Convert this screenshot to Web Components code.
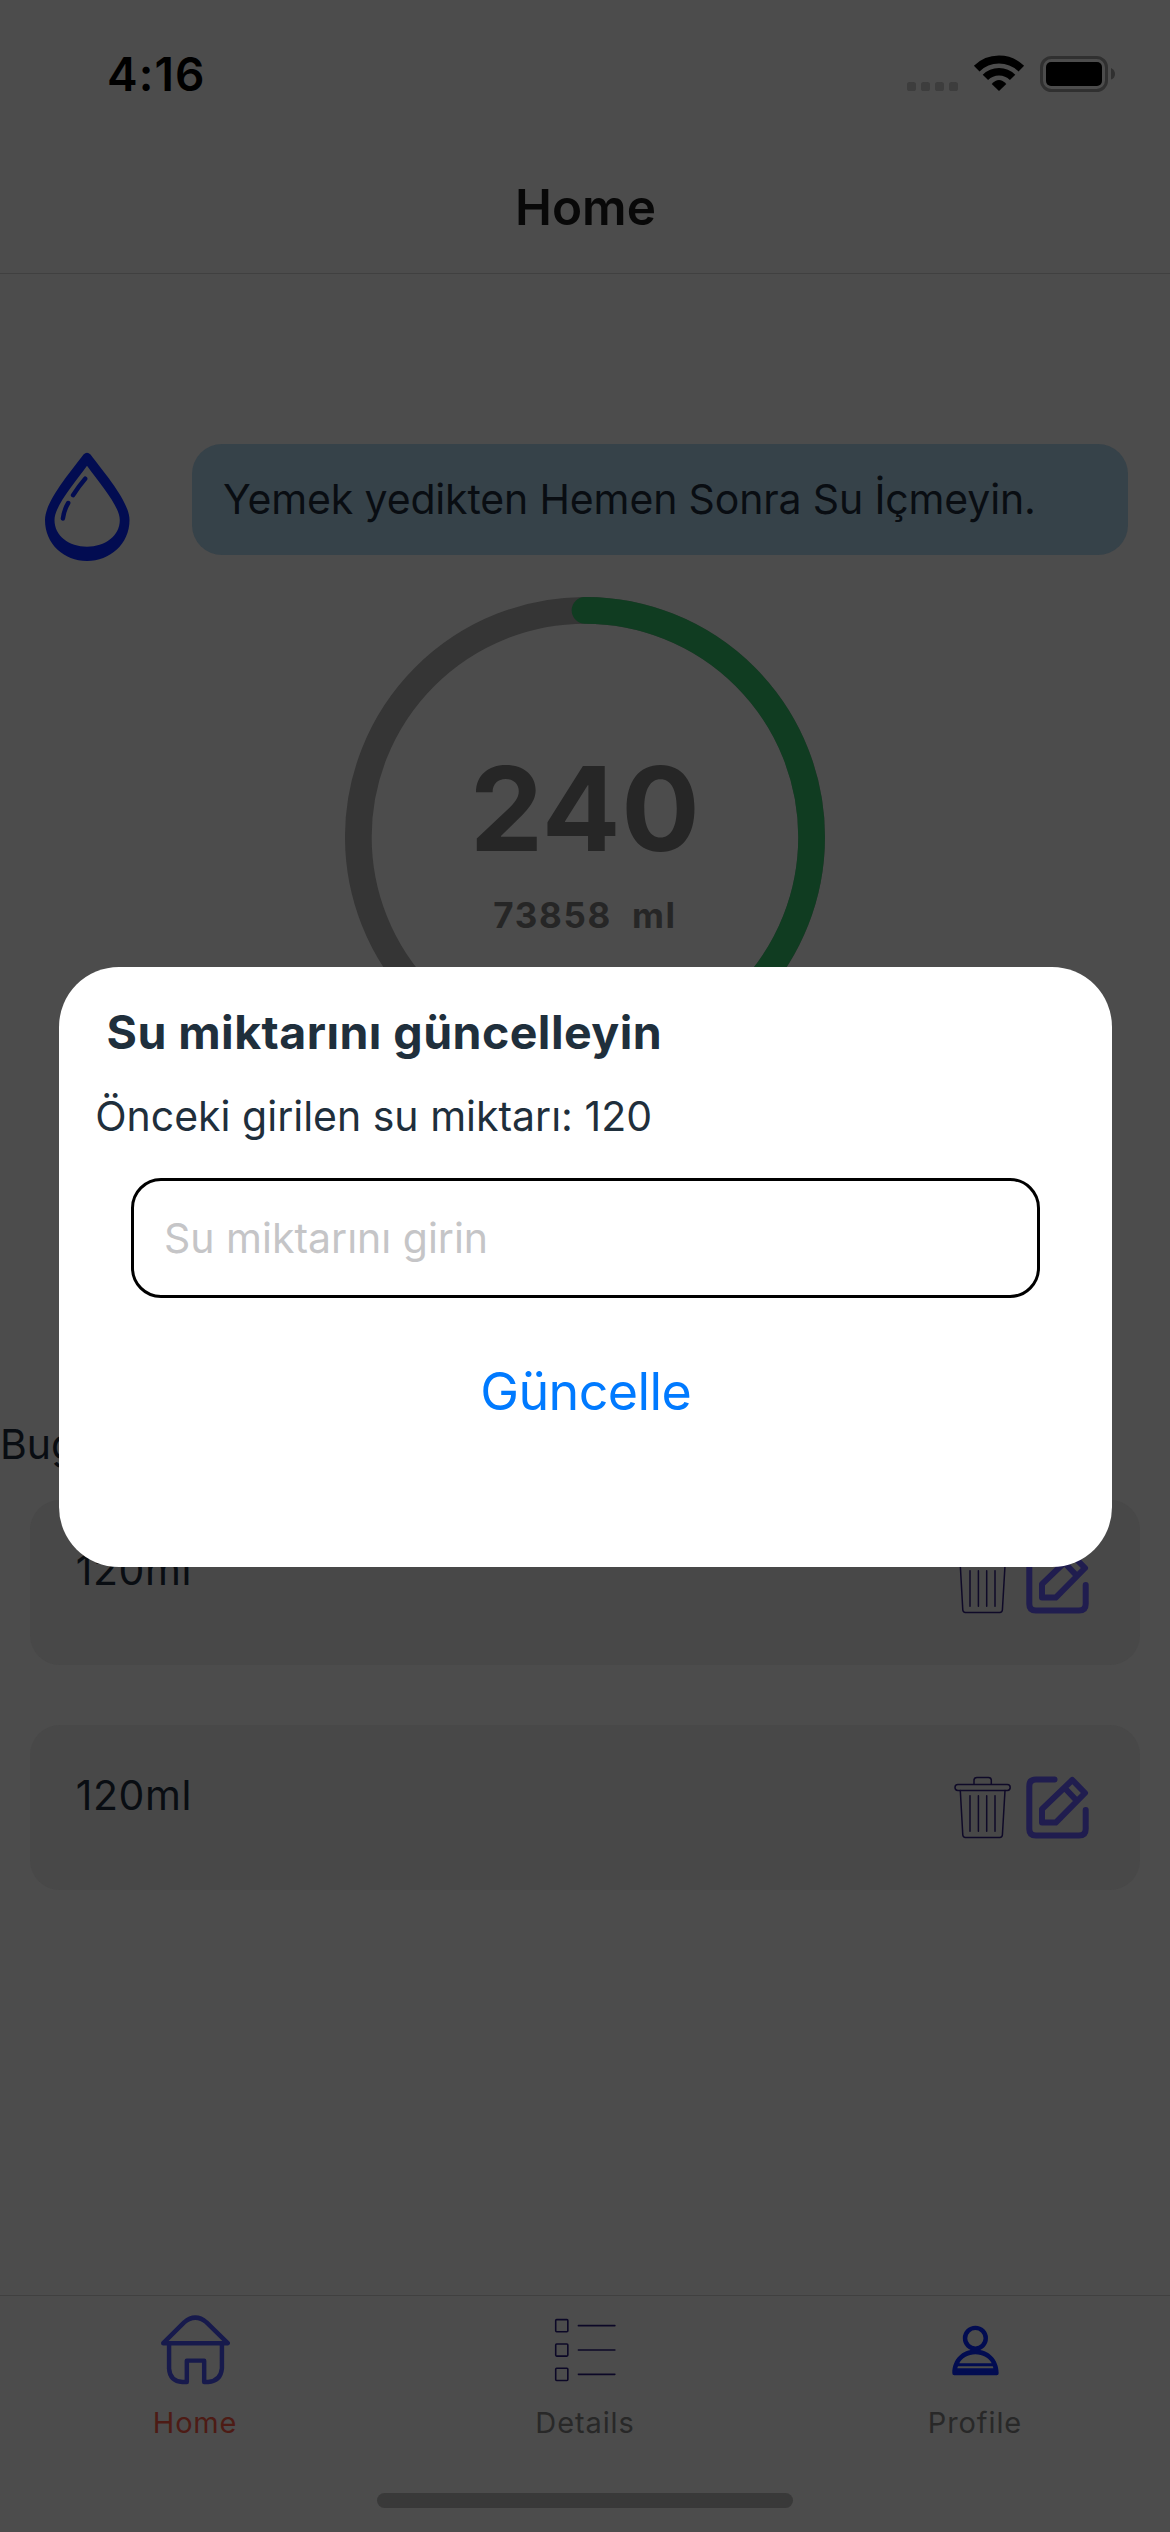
<!DOCTYPE html>
<html lang="tr">
<head>
<meta charset="utf-8">
<title>Home</title>
<style>
html, body { margin: 0; padding: 0; background: #4c4c4c; }
body { width: 1170px; height: 2532px; overflow: hidden; font-family: Inter, "Liberation Sans", sans-serif; }
</style>
</head>
<body>
<water-app></water-app>
<script>
const define = (name, html) => {
  const template = document.createElement('template');
  template.innerHTML = html;
  customElements.define(name, class extends HTMLElement {
    constructor() {
      super();
      this.attachShadow({ mode: 'open' }).append(template.content.cloneNode(true));
    }
  });
};

define('status-bar', `
<style>
:host { display: flex; justify-content: space-between; align-items: flex-start; box-sizing: border-box; height: 141px; padding: 44px 55px 0 107px; color: #000; }
.time { font-size: 46px; line-height: 60px; font-weight: 600; letter-spacing: 1.1px; }
svg { display: block; margin-top: 6px; }
</style>
<span class="time"><slot></slot></span>
<svg width="208" height="46" viewBox="0 0 208 46" fill="none">
  <g fill="#3d3d3d"><rect y="32" width="9" height="9" rx="2.6"/><rect x="14" y="32" width="9" height="9" rx="2.6"/><rect x="28" y="32" width="9" height="9" rx="2.6"/><rect x="42" y="32" width="9" height="9" rx="2.6"/></g>
  <path d="M69.7 18.7A31.8 31.8 0 0 1 114.3 18.7" stroke="#000" stroke-width="8"/>
  <path d="M78.4 27.4A19.2 19.2 0 0 1 105.6 27.4" stroke="#000" stroke-width="7.6"/>
  <path d="M92 41L84.7 33.9Q92 26.3 99.3 33.9Z" fill="#000"/>
  <rect x="134.5" y="7.5" width="65" height="33" rx="10" stroke="#303030" stroke-width="3"/>
  <rect x="139" y="12" width="56" height="24" rx="5" fill="#000"/>
  <path d="M204 18Q208 20 208 24T204 29.6Z" fill="#303030"/>
</svg>`);

define('nav-header', `
<style>
:host { display: flex; align-items: center; justify-content: center; box-sizing: border-box; height: 133px; padding-left: 1px; border-bottom: 1px solid #404040; color: #080808; font-size: 49.5px; line-height: 60px; font-weight: 600; }
</style><slot></slot>`);

define('drinking-tip', `
<style>
:host { display: flex; height: 111px; padding-left: 44px; }
svg { display: block; flex: none; margin: 6px 60px 0 0; }
.bubble { display: flex; align-items: center; box-sizing: border-box; width: 936px; height: 111px; padding: 0 0 2px 31px; border-radius: 30px; background: #364249; color: #090d12; font-size: 41px; line-height: 50px; letter-spacing: -0.15px; white-space: nowrap; }
</style>
<svg width="88" height="114" viewBox="0 0 88 114">
  <path fill="#020c51" fill-rule="evenodd" d="M39.5 4.5Q43 1 46.5 4.5C62 25 85.5 52 85.5 70C85.5 94 66 111 43 111S1 94 1 70C1 52 24 25 39.5 4.5ZM43 15.7C56 34 75.8 56 75.8 70C75.8 86 61 96.7 43 96.7S10.5 86 10.5 70C10.5 56 30 34 43 15.7Z"/>
  <path fill="none" stroke="#020c51" stroke-width="4.4" stroke-linecap="round" d="M41.2 28.7Q34.5 36.5 29 45.2M24.2 53Q20 60 18.9 68.5"/>
</svg>
<div class="bubble"><slot></slot></div>`);

define('progress-ring', `
<style>
:host { display: grid; justify-content: center; margin-top: 42px; font-weight: 700; color: #262626; }
svg, .label { grid-area: 1 / 1; display: block; }
.label { display: flex; flex-direction: column; align-items: center; padding-top: 142px; }
.value { font-size: 116.5px; line-height: 140px; letter-spacing: 0.5px; }
.goal { font-size: 35px; line-height: 44px; margin-top: 14px; letter-spacing: 1.7px; white-space: pre; }
</style>
<svg width="480" height="480" viewBox="0 0 480 480" fill="none" stroke-width="26.67">
  <circle cx="240" cy="240" r="226.67" stroke="#353535"/>
  <path d="M240 13.33A226.67 226.67 0 0 1 240 466.67" stroke="#103c21" stroke-linecap="round"/>
</svg>
<div class="label"><span class="value"><slot name="value"></slot></span><span class="goal"><slot name="goal"></slot></span></div>`);

define('trash-icon', `
<style>:host { display: block; }svg { display: block; }</style>
<svg width="60" height="66" viewBox="0 0 60 66" fill="none" stroke="#0f0a28" stroke-width="1.5" stroke-linecap="round" stroke-linejoin="round">
  <rect x="3" y="9.5" width="55.2" height="5.9" rx="2.9"/>
  <path d="M22 9.3V5.3Q22 2.4 25 2.4H36.4Q39.3 2.4 39.3 5.3V9.3M8.3 15.5L10.8 60Q11 62.4 13.4 62.4H47.8Q50.2 62.4 50.4 60L53 15.5M18 20.8V56.2M26.4 20.8V56.2M34.7 20.8V56.2M43 20.8V56.2"/>
</svg>`);

define('edit-icon', `
<style>:host { display: block; }svg { display: block; }</style>
<svg width="68" height="66" viewBox="0 0 68 66" fill="none" stroke="#201d4f" stroke-width="6" stroke-linecap="round" stroke-linejoin="round">
  <path d="M30.5 4.4H12Q5.3 4.4 5.3 11V54Q5.3 60.6 12 60.6H55Q61.7 60.6 61.7 54V35M48.3 5L61 18L31.7 47.6H18V34.2ZM40.7 13L53 26"/>
</svg>`);

define('intake-card', `
<style>
:host { display: flex; align-items: flex-start; box-sizing: border-box; height: 165px; padding: 45px 48px 0 45.7px; border-radius: 30px; background: #484848; color: #090d12; }
.amount { flex: 1; font-size: 41px; line-height: 50px; letter-spacing: 0.6px; }
.actions { display: flex; gap: 12px; padding-top: 5px; }
</style>
<span class="amount"><slot></slot></span>
<div class="actions"><trash-icon></trash-icon><edit-icon></edit-icon></div>`);

define('intake-list', `
<style>
:host { display: block; margin-top: 342px; }
.heading { display: block; font-size: 41px; line-height: 50px; color: #090d12; }
.cards { display: flex; flex-direction: column; gap: 60px; margin: 31px 30px 0; }
</style>
<span class="heading"><slot name="heading"></slot></span>
<div class="cards"><slot></slot></div>`);

define('tab-item', `
<style>
:host { display: flex; flex: 1; flex-direction: column; align-items: center; gap: 20px; color: #282828; font-size: 29px; line-height: 36px; letter-spacing: 0.9px; }
:host([active]) { color: #4d1b15; letter-spacing: 0.75px; }
</style>
<slot name="icon"></slot><span><slot></slot></span>`);

define('tab-bar', `
<style>
:host { display: flex; flex-direction: column; align-items: center; box-sizing: border-box; height: 237px; margin-top: auto; padding-top: 18px; border-top: 1px solid #404040; }
.tabs { display: flex; width: 100%; height: 127px; }
.indicator { width: 416px; height: 15px; margin-top: 52px; border-radius: 8px; background: #393939; }
</style>
<div class="tabs"><slot></slot></div><div class="indicator"></div>`);

define('update-dialog', `
<style>
:host { position: absolute; inset: 0; display: flex; align-items: center; justify-content: center; color: #1f2f3c; }
.sheet { display: flex; flex-direction: column; box-sizing: border-box; width: 1053px; height: 600px; margin-top: 2px; padding-top: 34.5px; border-radius: 60px; background: #fff; }
.title { margin-left: 48px; font-size: 46.5px; line-height: 60px; font-weight: 700; letter-spacing: 0.44px; }
.previous { margin: 29.5px 0 0 36.7px; font-size: 41px; line-height: 50px; }
.field { display: flex; align-items: center; box-sizing: border-box; width: 909px; height: 120px; margin: 37px 0 0 72.5px; padding-left: 30px; border: 3px solid #000; border-radius: 30px; color: #c5c5c7; font-size: 41px; line-height: 50px; }
.submit { align-self: center; margin-top: 62px; padding-left: 1.5px; font-size: 52px; line-height: 64px; letter-spacing: -0.6px; color: #007aff; }
</style>
<section class="sheet" role="dialog">
  <span class="title"><slot name="title"></slot></span>
  <span class="previous"><slot name="previous"></slot></span>
  <div class="field"><slot name="placeholder"></slot></div>
  <span class="submit" role="button"><slot name="submit"></slot></span>
</section>`);

define('water-app', `
<style>
:host { position: relative; display: flex; flex-direction: column; width: 1170px; height: 2532px; overflow: hidden; background: #4c4c4c; }
main { padding-top: 170px; }
svg { display: block; }
</style>
<status-bar>4:16</status-bar>
<nav-header>Home</nav-header>
<main>
  <drinking-tip>Yemek yedikten Hemen Sonra Su İçmeyin.</drinking-tip>
  <progress-ring><span slot="value">240</span><span slot="goal">73858&nbsp;&nbsp;ml</span></progress-ring>
  <intake-list>
    <span slot="heading">Bug</span>
    <intake-card>120ml</intake-card>
    <intake-card>120ml</intake-card>
  </intake-list>
</main>
<tab-bar>
  <tab-item active>
    <svg slot="icon" width="72" height="72" viewBox="0 0 72 72" fill="none" stroke="#171a4c" stroke-width="4.5" stroke-linejoin="round" stroke-linecap="round"><path d="M3.8 29.6L25 8.5Q36.3 -1.1 47.7 8.5L69.2 29.6ZM9.7 29.7V55.3Q10.5 68 23.3 69H27.7V47.3H45.3V69H49.3Q62 68 63.3 55.3V29.7"/></svg>
    Home
  </tab-item>
  <tab-item>
    <svg slot="icon" width="72" height="72" viewBox="0 0 72 72" fill="none" stroke="#0c0827" stroke-width="1.6" stroke-linecap="round"><rect x="6.3" y="5.7" width="12.3" height="12.3" rx="1"/><rect x="6.3" y="30.4" width="12.3" height="12.3" rx="1"/><rect x="6.3" y="55.1" width="12.3" height="12.3" rx="1"/><path d="M29.3 11.8H66.3M29.3 36.5H66.3M29.3 61.2H66.3"/></svg>
    Details
  </tab-item>
  <tab-item>
    <svg slot="icon" width="72" height="72" viewBox="0 0 72 72"><circle cx="36.4" cy="24.6" r="10.5" fill="none" stroke="#020c51" stroke-width="4.5"/><path fill="#020c51" fill-rule="evenodd" d="M13 60C13 46 23 36 36.4 36S60 46 60 60Q60 62 58 62H15Q13 62 13 60ZM20 50C23 44.3 29 40.8 36.4 40.8S50 44.3 53 50ZM18.7 53H54L54.7 55H18Z"/></svg>
    Profile
  </tab-item>
</tab-bar>
<update-dialog>
  <span slot="title">Su miktarını güncelleyin</span>
  <span slot="previous">Önceki girilen su miktarı: 120</span>
  <span slot="placeholder">Su miktarını girin</span>
  <span slot="submit">Güncelle</span>
</update-dialog>`);
</script>
</body>
</html>
